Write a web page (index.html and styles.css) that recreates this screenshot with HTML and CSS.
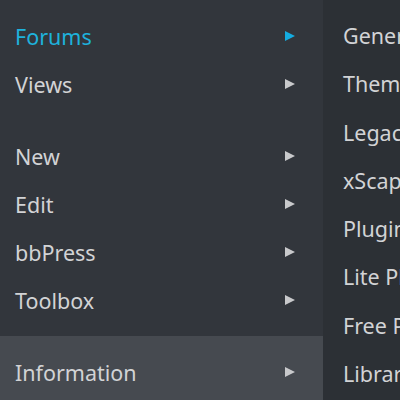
FILE: index.html
```html
<!DOCTYPE html>
<html>
<head>
<meta charset="utf-8">
<link rel="stylesheet" href="styles.css">
</head>
<body>
<div class="wrap">
  <nav class="menu">
    <div class="group">
      <div class="item active"><span>Forums</span><i class="arrow"></i></div>
      <div class="item"><span>Views</span><i class="arrow"></i></div>
    </div>
    <div class="group">
      <div class="item"><span>New</span><i class="arrow"></i></div>
      <div class="item"><span>Edit</span><i class="arrow"></i></div>
      <div class="item"><span>bbPress</span><i class="arrow"></i></div>
      <div class="item"><span>Toolbox</span><i class="arrow"></i></div>
    </div>
    <div class="group hl">
      <div class="item"><span>Information</span><i class="arrow"></i></div>
    </div>
  </nav>
  <nav class="sub">
    <div class="sitem">General</div>
    <div class="sitem">Themes</div>
    <div class="sitem">Legacy</div>
    <div class="sitem">xScape</div>
    <div class="sitem">Plugins</div>
    <div class="sitem">Lite Plugins</div>
    <div class="sitem">Free Plugins</div>
    <div class="sitem">Library</div>
  </nav>
</div>
</body>
</html>
```
FILE: styles.css
```css
html, body {
  margin: 0;
  padding: 0;
  width: 400px;
  height: 400px;
  overflow: hidden;
  background: #2c3035;
}
.wrap {
  display: flex;
  height: 400px;
  overflow: hidden;
  font-family: "Noto Sans", "Open Sans", sans-serif;
  font-size: 21.5px;
  color: #d2d3d5;
}
.menu {
  width: 323px;
  flex: none;
  height: 400px;
  display: flex;
  flex-direction: column;
  background: #32363c;
}
.group {
  padding: 12px 0;
}
.group.hl {
  flex: 1;
  background: #464a50;
  padding-bottom: 0;
}
.item {
  height: 48px;
  display: flex;
  align-items: center;
  justify-content: space-between;
  padding: 0 28px 0 15px;
}
.item.active {
  color: #1eb2dc;
}
.arrow {
  width: 0;
  height: 0;
  border-top: 5.5px solid transparent;
  border-bottom: 5.5px solid transparent;
  border-left: 10px solid #c8c9cb;
}
.item.active .arrow {
  border-left-color: #14ace0;
}
.sub {
  flex: 1;
  height: 400px;
  padding-top: 12px;
  box-sizing: border-box;
  white-space: nowrap;
  overflow: hidden;
}
.sitem {
  height: 48.3px;
  line-height: 48px;
  padding-left: 20px;
}
```
